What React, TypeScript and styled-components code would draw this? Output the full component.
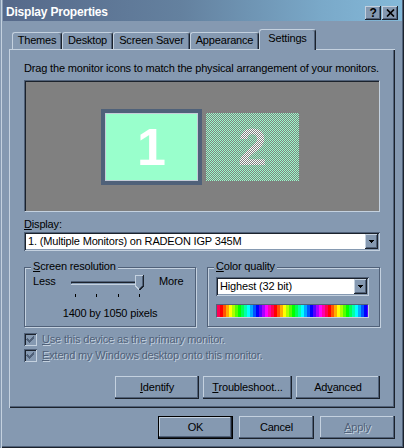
import React from 'react';
import styled, { createGlobalStyle } from 'styled-components';

const C = {
  face: '#8599b1',
  light: '#c4d1df',
  shadow: '#506179',
  dark: '#1b222c',
  mint: '#99ffcc',
  grey: '#808080',
};

const spectrum = (() => {
  const step = 3;
  const n = 18;
  const stops: string[] = [];
  for (let i = 0; i < n; i++) {
    const h = (i * 20 + 340) % 360;
    stops.push(`hsl(${h}, 100%, 50%) ${i * step}px ${(i + 1) * step}px`);
  }
  return `repeating-linear-gradient(90deg, ${stops.join(', ')})`;
})();

const Global = createGlobalStyle`
  html, body { margin: 0; padding: 0; background: ${C.face}; }
  body {
    font-family: "Liberation Sans", Arial, sans-serif;
    font-size: 11px;
    letter-spacing: -0.17px;
    color: #000;
  }
  * { box-sizing: border-box; }
`;

const Window = styled.div`
  width: 404px;
  height: 448px;
  background: ${C.face};
  padding: 0 2px 2px 3px;
  display: flex;
  flex-direction: column;
  box-shadow: inset 1px 0 0 ${C.face}, inset 2px 0 0 ${C.light},
    inset -1px -1px 0 ${C.dark}, inset -2px -2px 0 ${C.shadow};
`;

const TitleBar = styled.div`
  height: 21px;
  flex: none;
  display: flex;
  align-items: flex-start;
  padding: 0 4px 0 3px;
  background: linear-gradient(90deg, #56698a 0%, #64819f 45%, #7aa9c9 80%, #84b9d9 100%);
`;

const TitleText = styled.div`
  flex: 1;
  margin-top: 5px;
  color: #fff;
  font-weight: bold;
  font-size: 12px;
  letter-spacing: -0.2px;
  line-height: 14px;
`;

const CaptionButtons = styled.div`
  display: flex;
  gap: 1px;
  margin-top: 6px;
`;

const CaptionButton = styled.div`
  width: 16px;
  height: 14px;
  background: ${C.face};
  display: flex;
  align-items: center;
  justify-content: center;
  font-weight: bold;
  font-size: 12px;
  line-height: 14px;
  box-shadow: inset -1px -1px 0 ${C.dark}, inset 1px 1px 0 ${C.light}, inset -2px -2px 0 ${C.shadow};
`;

const Body = styled.div`
  flex: 1;
  display: flex;
  flex-direction: column;
  padding: 8px 7px 0 6px;
`;

const TabStrip = styled.div`
  height: 20px;
  display: flex;
  align-items: flex-end;
  padding-left: 3px;
`;

const Tab = styled.div<{ $w: number; $active?: boolean }>`
  width: ${(p) => p.$w}px;
  height: ${(p) => (p.$active ? 21 : 17)}px;
  margin-bottom: ${(p) => (p.$active ? -1 : 0)}px;
  position: relative;
  z-index: ${(p) => (p.$active ? 1 : 0)};
  background: ${C.face};
  border-top: 1px solid ${C.light};
  border-left: 1px solid ${C.light};
  border-right: 1px solid ${C.dark};
  border-radius: 3px 3px 0 0;
  box-shadow: inset -1px 0 0 ${C.shadow};
  text-align: center;
  line-height: 13px;
  padding-top: ${(p) => (p.$active ? 2 : 1)}px;
  white-space: nowrap;
`;

const Panel = styled.div`
  height: 359px;
  flex: none;
  background: ${C.face};
  box-shadow: inset 1px 1px 0 ${C.light}, inset -1px -1px 0 ${C.dark}, inset -2px -2px 0 ${C.shadow};
  padding: 13px 15px 0 15px;
  display: flex;
  flex-direction: column;
`;

const Text = styled.div`
  line-height: 13px;
  white-space: nowrap;
`;

const Disabled = styled.span`
  color: ${C.shadow};
  text-shadow: 1px 1px 0 ${C.light};
`;

const U = styled.span`
  text-decoration: underline;
  text-underline-offset: 1px;
`;

const Arrangement = styled.div`
  margin-top: 5px;
  height: 132px;
  background: ${C.grey};
  border: 1px solid;
  border-color: ${C.shadow} ${C.light} ${C.light} ${C.shadow};
  box-shadow: inset 1px 1px 0 ${C.dark};
  display: flex;
  align-items: center;
  justify-content: center;
  gap: 4px;
  padding: 2px 4px 0 0;
`;

const checker = (a: string, b: string) =>
  `conic-gradient(${a} 25%, ${b} 0 50%, ${a} 0 75%, ${b} 0)`;

const Monitor = styled.div<{ $primary?: boolean }>`
  width: ${(p) => (p.$primary ? 101 : 93)}px;
  height: ${(p) => (p.$primary ? 76 : 68)}px;
  display: flex;
  align-items: center;
  justify-content: center;
  font-family: "Liberation Sans", Arial, sans-serif;
  font-weight: bold;
  font-size: 52px;
  letter-spacing: 0;
  ${(p) =>
    p.$primary
      ? `
    background: ${C.mint};
    border: 4px solid #4f6179;
    box-shadow: inset 0 0 0 1px #c5cdd8;
    color: #fff;
  `
      : `
    background: ${checker(C.mint, C.grey)};
    background-size: 2px 2px;
  `}
`;

const CheckerDigit = styled.span`
  background: ${checker('#ffffff', C.grey)};
  background-size: 2px 2px;
  -webkit-background-clip: text;
  background-clip: text;
  color: transparent;
`;

const Label = styled(Text)`
  margin-top: 6px;
`;

const SelectWrap = styled.div`
  margin-top: 1px;
`;

const Select = styled.div<{ $w?: number }>`
  ${(p) => (p.$w ? `width: ${p.$w}px;` : '')}
  height: 19px;
  background: #fff;
  display: flex;
  align-items: stretch;
  padding: 2px;
  box-shadow: inset 1px 1px 0 ${C.shadow}, inset -1px -1px 0 ${C.light},
    inset 2px 2px 0 ${C.dark}, inset -2px -2px 0 ${C.face};
`;

const SelectValue = styled.div`
  flex: 1;
  padding-left: 2px;
  line-height: 15px;
  white-space: nowrap;
`;

const SelectArrow = styled.div`
  width: 13px;
  background: ${C.face};
  display: flex;
  align-items: center;
  justify-content: center;
  box-shadow: inset -1px -1px 0 ${C.dark}, inset 1px 1px 0 ${C.light}, inset -2px -2px 0 ${C.shadow};
`;

const Groups = styled.div`
  margin-top: 16px;
  display: grid;
  grid-template-columns: 172px 173px;
  column-gap: 11px;
`;

const Group = styled.div`
  position: relative;
  height: 60px;
  border: 1px solid ${C.shadow};
  box-shadow: inset 1px 1px 0 ${C.light}, 1px 1px 0 ${C.light};
  display: flex;
  flex-direction: column;
`;

const Legend = styled.div`
  position: absolute;
  top: -8px;
  left: 6px;
  padding: 0 2px;
  background: ${C.face};
  line-height: 13px;
  white-space: nowrap;
`;

const SliderRow = styled.div`
  display: flex;
  margin-top: 6px;
  padding-left: 8px;
  line-height: 13px;
`;

const SideLabel = styled.div<{ $w?: number }>`
  ${(p) => (p.$w ? `width: ${p.$w}px;` : '')}
  padding-top: 1px;
`;

const Slider = styled.div`
  position: relative;
  width: 73px;
  height: 24px;
  margin-right: 15px;
`;

const Track = styled.div`
  position: absolute;
  left: 0;
  top: 7px;
  width: 72px;
  height: 4px;
  background: ${C.face};
  box-shadow: inset 0 1px 0 ${C.shadow}, inset 0 2px 0 ${C.dark}, inset 0 -1px 0 ${C.light},
    inset 1px 0 0 ${C.shadow}, inset -1px 0 0 ${C.light};
`;

const Thumb = styled.svg`
  position: absolute;
  left: 64px;
  top: 1px;
`;

const Ticks = styled.div`
  position: absolute;
  left: 4px;
  top: 20px;
  width: 65px;
  display: flex;
  justify-content: space-between;
`;

const TickMark = styled.div`
  width: 1px;
  height: 3px;
  background: #000;
`;

const Caption = styled(Text)`
  text-align: center;
  margin-top: 9px;
`;

const ColorSelectWrap = styled.div`
  margin: 9px 0 0 8px;
`;

const ColorBar = styled.div`
  margin: 8px 0 0 8px;
  width: 153px;
  height: 14px;
  background: ${spectrum};
  border: 1px solid;
  border-color: ${C.shadow} ${C.light} ${C.light} ${C.shadow};
`;

const CheckRow = styled.div<{ $first?: boolean }>`
  display: flex;
  align-items: center;
  height: 13px;
  margin-top: ${(p) => (p.$first ? 6 : 3)}px;
  line-height: 13px;
  white-space: nowrap;
`;

const CheckBox = styled.div`
  width: 13px;
  height: 13px;
  margin-right: 5px;
  background: ${C.face};
  display: flex;
  align-items: center;
  justify-content: center;
  box-shadow: inset 1px 1px 0 ${C.shadow}, inset -1px -1px 0 ${C.light},
    inset 2px 2px 0 ${C.dark}, inset -2px -2px 0 ${C.face};
`;

const ButtonRow = styled.div<{ $gap: number; $top: number }>`
  display: flex;
  justify-content: flex-end;
  gap: ${(p) => p.$gap}px;
  margin-top: ${(p) => p.$top}px;
`;

const Button = styled.div<{ $w: number; $default?: boolean }>`
  width: ${(p) => p.$w}px;
  height: 23px;
  background: ${C.face};
  display: flex;
  align-items: center;
  justify-content: center;
  line-height: 13px;
  white-space: nowrap;
  box-shadow: ${(p) =>
    p.$default
      ? `inset 0 0 0 1px #000, inset -1px -1px 0 1px ${C.dark}, inset -2px -2px 0 1px ${C.shadow}, inset 1px 1px 0 1px ${C.light}`
      : `inset -1px -1px 0 ${C.dark}, inset -2px -2px 0 ${C.shadow}, inset 1px 1px 0 ${C.light}`};
`;

const ArrowIcon = () => (
  <svg width="5" height="3" viewBox="0 0 5 3" shapeRendering="crispEdges">
    <path d="M0 0h5v1h-1v1h-1v1h-1v-1h-1v-1h-1z" fill="#000" />
  </svg>
);

const CloseIcon = () => (
  <svg width="9" height="8" viewBox="0 0 9 8">
    <path d="M1 0.5 L8 7.5 M8 0.5 L1 7.5" stroke="#000" strokeWidth="1.7" fill="none" />
  </svg>
);

const CheckIcon = () => (
  <svg width="9" height="9" viewBox="0 0 9 9" shapeRendering="crispEdges">
    <path
      d="M1 3h1v1h1v1h1v-1h1v-1h1v-1h1v-1h1v3h-1v1h-1v1h-1v1h-1v1h-1v-1h-1v-1h-1v-1h-1z"
      fill={C.shadow}
    />
  </svg>
);

const ThumbIcon = () => (
  <Thumb width="9" height="16" viewBox="0 0 9 16" shapeRendering="crispEdges">
    <path d="M0 0 H9 V11 L5 15 H4 L0 11 Z" fill={C.face} />
    <path d="M0.5 11 V0.5 H8" stroke={C.light} fill="none" />
    <path d="M8.5 0 V11 L4.5 15" stroke={C.dark} fill="none" />
    <path d="M7.5 1 V10.6 L4.5 13.6" stroke={C.shadow} fill="none" />
    <path d="M0.5 11 L4 14.5" stroke={C.light} fill="none" />
  </Thumb>
);

export default function App() {
  return (
    <>
      <Global />
      <Window>
        <TitleBar>
          <TitleText>Display Properties</TitleText>
          <CaptionButtons>
            <CaptionButton>?</CaptionButton>
            <CaptionButton>
              <CloseIcon />
            </CaptionButton>
          </CaptionButtons>
        </TitleBar>
        <Body>
          <TabStrip>
            <Tab $w={50}>Themes</Tab>
            <Tab $w={51}>Desktop</Tab>
            <Tab $w={77}>Screen Saver</Tab>
            <Tab $w={69}>Appearance</Tab>
            <Tab $w={57} $active>
              Settings
            </Tab>
          </TabStrip>
          <Panel>
            <Text>Drag the monitor icons to match the physical arrangement of your monitors.</Text>
            <Arrangement>
              <Monitor $primary>1</Monitor>
              <Monitor>
                <CheckerDigit>2</CheckerDigit>
              </Monitor>
            </Arrangement>
            <Label>
              <U>D</U>isplay:
            </Label>
            <SelectWrap>
              <Select>
                <SelectValue>1. (Multiple Monitors) on RADEON IGP 345M</SelectValue>
                <SelectArrow>
                  <ArrowIcon />
                </SelectArrow>
              </Select>
            </SelectWrap>
            <Groups>
              <Group>
                <Legend>
                  <U>S</U>creen resolution
                </Legend>
                <SliderRow>
                  <SideLabel $w={38}>Less</SideLabel>
                  <Slider>
                    <Track />
                    <Ticks>
                      <TickMark />
                      <TickMark />
                      <TickMark />
                      <TickMark />
                    </Ticks>
                    <ThumbIcon />
                  </Slider>
                  <SideLabel>More</SideLabel>
                </SliderRow>
                <Caption>1400 by 1050 pixels</Caption>
              </Group>
              <Group>
                <Legend>
                  <U>C</U>olor quality
                </Legend>
                <ColorSelectWrap>
                  <Select $w={153}>
                    <SelectValue>Highest (32 bit)</SelectValue>
                    <SelectArrow>
                      <ArrowIcon />
                    </SelectArrow>
                  </Select>
                </ColorSelectWrap>
                <ColorBar />
              </Group>
            </Groups>
            <CheckRow $first>
              <CheckBox>
                <CheckIcon />
              </CheckBox>
              <Disabled>
                <U>U</U>se this device as the primary monitor.
              </Disabled>
            </CheckRow>
            <CheckRow>
              <CheckBox>
                <CheckIcon />
              </CheckBox>
              <Disabled>
                <U>E</U>xtend my Windows desktop onto this monitor.
              </Disabled>
            </CheckRow>
            <ButtonRow $gap={4} $top={14}>
              <Button $w={84}>
                <span>
                  <U>I</U>dentify
                </span>
              </Button>
              <Button $w={89}>
                <span>
                  <U>T</U>roubleshoot...
                </span>
              </Button>
              <Button $w={84}>
                <span>
                  Ad<U>v</U>anced
                </span>
              </Button>
            </ButtonRow>
          </Panel>
          <ButtonRow $gap={6} $top={8}>
            <Button $w={75} $default>
              OK
            </Button>
            <Button $w={75}>Cancel</Button>
            <Button $w={75}>
              <Disabled>
                <U>A</U>pply
              </Disabled>
            </Button>
          </ButtonRow>
        </Body>
      </Window>
    </>
  );
}
